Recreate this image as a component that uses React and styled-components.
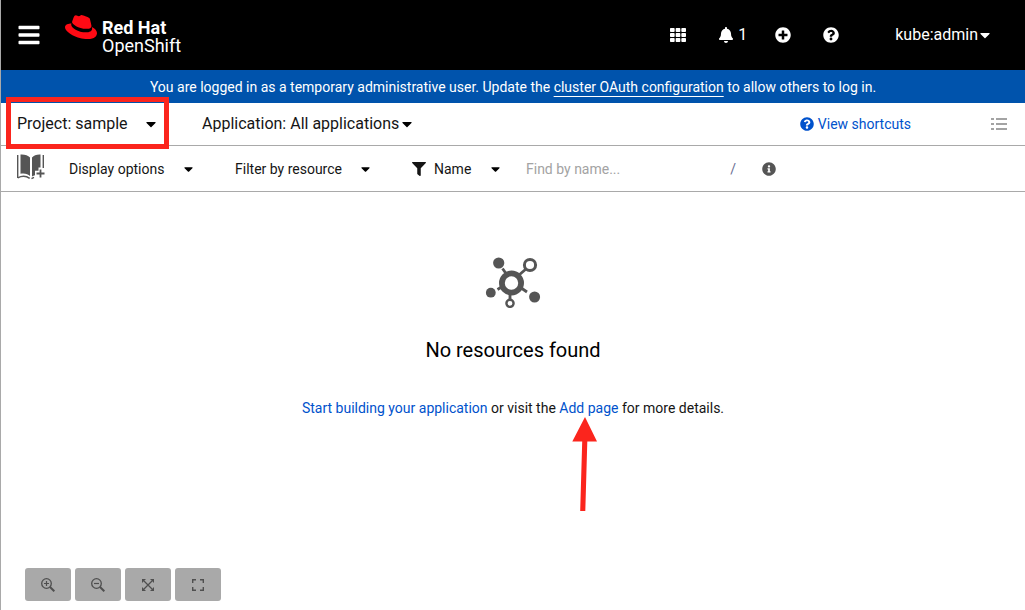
import React from 'react';
import styled, { createGlobalStyle } from 'styled-components';
import {
  FaBars,
  FaTh,
  FaBell,
  FaPlusCircle,
  FaQuestionCircle,
  FaCaretDown,
  FaFilter,
  FaInfoCircle,
  FaRedhat,
} from 'react-icons/fa';

const color = {
  link: '#0052cc',
  banner: '#0053ac',
  line: '#a9a9a9',
  icon: '#555555',
  mark: '#fb251d',
};

const GlobalStyle = createGlobalStyle`
  *, *::before, *::after { box-sizing: border-box; }
  body {
    margin: 0;
    background: #ffffff;
    color: #151515;
    font-family: Roboto, "Liberation Sans", sans-serif;
    font-size: 14px;
    line-height: 20px;
  }
  button, input, select { font: inherit; color: inherit; }
  svg { display: block; flex: none; }
`;

const Page = styled.div`
  min-height: 100vh;
  display: flex;
  flex-direction: column;
  border-left: 1px solid ${color.line};
`;

const Masthead = styled.header`
  display: flex;
  align-items: center;
  height: 70px;
  padding: 0 35px 0 16px;
  background: #000000;
  color: #ffffff;
`;

const PlainButton = styled.button`
  display: flex;
  align-items: center;
  gap: 4px;
  padding: 0;
  border: 0;
  background: none;
  cursor: pointer;
  font-size: ${(p) => (p.$large ? 16 : 14)}px;
`;

const Brand = styled.a`
  display: flex;
  align-items: flex-start;
  gap: 5px;
  margin-left: 24px;
  padding-bottom: 4px;
  color: #ffffff;
  text-decoration: none;
`;

const BrandName = styled.span`
  display: flex;
  flex-direction: column;
  padding-top: 8px;
  font-size: 18px;
  line-height: 18px;
`;

const BrandStrong = styled.strong`
  font-weight: 700;
`;

const HatIcon = styled(FaRedhat)`
  color: #ff0a14;
`;

const Tools = styled.nav`
  display: flex;
  align-items: center;
  gap: 32px;
  margin-left: auto;
`;

const NotificationButton = styled(PlainButton)`
  margin-right: -4px;
`;

const UserButton = styled(PlainButton)`
  gap: 2px;
  margin-left: 24px;
`;

const Caret = styled(FaCaretDown)`
  width: ${(p) => (p.$large ? 10 : 9)}px;
  height: ${(p) => (p.$large ? 16 : 14)}px;
`;

const Banner = styled.div`
  padding: 7px 16px 6px;
  background: ${color.banner};
  color: #ffffff;
  text-align: center;
`;

const BannerLink = styled.a`
  color: inherit;
  text-decoration: underline;
  text-underline-offset: 4px;
`;

const Bar = styled.div`
  display: flex;
  align-items: center;
  height: ${(p) => (p.$tall ? 46 : 43)}px;
  padding: 0 18px 0 16px;
  border-bottom: 1px solid ${color.line};
`;

const Picker = styled.label`
  display: grid;
  grid-template-columns: auto;
  align-items: center;
  font-size: ${(p) => (p.$large ? 16 : 14)}px;
  margin-left: ${(p) => p.$before || 0}px;

  select {
    grid-area: 1 / 1;
    appearance: none;
    padding: 0 ${(p) => p.$space}px 0 0;
    border: 0;
    background: none;
    color: #151515;
  }

  svg {
    grid-area: 1 / 1;
    justify-self: end;
    color: #000000;
    pointer-events: none;
  }
`;

const Marked = styled.div`
  position: relative;

  &::after {
    content: '';
    position: absolute;
    inset: -17px -13px -15px -11px;
    border: 5px solid ${color.mark};
    pointer-events: none;
  }
`;

const Shortcuts = styled.a`
  display: flex;
  align-items: center;
  gap: 4px;
  margin: 0 80px 0 auto;
  color: ${color.link};
  text-decoration: none;
`;

const CatalogButton = styled(PlainButton)`
  color: ${color.icon};
`;

const FilterPicker = styled.div`
  display: flex;
  align-items: center;
  gap: 8px;
  margin-left: 42px;
`;

const Search = styled.label`
  display: flex;
  align-items: center;
  margin-left: 26px;
  width: 210px;

  input {
    flex: 1;
    min-width: 0;
    padding: 0;
    border: 0;
    background: none;
    outline-offset: 4px;
  }
  input::placeholder { color: #a3a3a3; opacity: 1; }
`;

const Slash = styled.kbd`
  font-family: inherit;
  color: #6a6e90;
`;

const InfoButton = styled(PlainButton)`
  margin-left: 26px;
  color: ${color.icon};
`;

const Main = styled.main`
  flex: 1;
  display: flex;
  flex-direction: column;
`;

const EmptyState = styled.section`
  display: flex;
  flex-direction: column;
  align-items: center;
  padding-top: 64px;
`;

const Title = styled.h1`
  margin: 26px 0 0;
  color: #000000;
  font-size: 20px;
  font-weight: 400;
  line-height: 32px;
`;

const Message = styled.p`
  margin: 32px 0 0;
`;

const TextLink = styled.a`
  position: relative;
  color: ${color.link};
  text-decoration: none;
`;

const Arrow = styled.svg`
  position: absolute;
  top: 100%;
  left: 12px;
  pointer-events: none;
`;

const ViewControls = styled.div`
  display: flex;
  gap: 4px;
  margin-top: auto;
  padding: 0 24px 9px;
`;

const ControlButton = styled.button`
  display: flex;
  align-items: center;
  justify-content: center;
  width: 46px;
  height: 33px;
  padding: 0;
  border: 0;
  border-radius: 3px;
  background: ${color.line};
  color: #4f4f4f;
  cursor: pointer;
`;

function Dropdown({ label, text, large, before, space }) {
  return (
    <Picker $large={large} $before={before} $space={space}>
      <select aria-label={label} defaultValue={text}>
        <option>{text}</option>
      </select>
      <Caret $large={large} />
    </Picker>
  );
}

function ListIcon() {
  return (
    <svg width="16" height="12" viewBox="0 0 16 12" fill="#a3a3a3" aria-hidden="true">
      <path d="M0 0h3v2H0zM5 0h11v2H5zM0 5h3v2H0zM5 5h11v2H5zM0 10h3v2H0zM5 10h11v2H5z" />
    </svg>
  );
}

function CatalogIcon() {
  return (
    <svg width="28" height="30" viewBox="0 0 28 30" fill="none" aria-hidden="true">
      <path d="M3.500 .5c4-.3 7.500 .8 9.500 3V22c-2-2.200-5.500-3-9.500-2.300z" fill="currentColor" />
      <path d="M15 3.500c2-2.200 4.500-3.200 8.500-3V13.500h-2v3.300h-3.500v4.500c-1 .1-2 .5-3 1.200z" fill="currentColor" />
      <path d="M.7 1v23M26.300 1v13" stroke="currentColor" strokeWidth="1.400" />
      <path d="M.7 23.800c4-2 8.500-2 12 .6M14.500 24.600l2.500-1.200" stroke="currentColor" strokeWidth="1.500" />
      <path d="M23.500 15.500v8M19.500 19.500h8" stroke="currentColor" strokeWidth="1.800" />
    </svg>
  );
}

function TopologyIcon() {
  return (
    <svg width="56" height="52" viewBox="0 0 56 52" fill="none" stroke="#555" aria-hidden="true">
      <circle cx="26.500" cy="27" r="9.600" strokeWidth="5.800" />
      <circle cx="45" cy="9" r="5.600" strokeWidth="3" />
      <circle cx="25" cy="47.300" r="3.600" strokeWidth="2.400" />
      <g fill="#555" stroke="none">
        <circle cx="13.700" cy="7" r="5.600" />
        <circle cx="5.800" cy="36.700" r="4.900" />
        <circle cx="49.600" cy="41" r="5.500" />
      </g>
      <path
        d="M17.500 12.500l3.500 5M34 19l7-6M16.500 31l-4 2.500M35.500 31.500l6.500 4.500M25 38v6"
        strokeWidth="2.800"
      />
    </svg>
  );
}

function ZoomIcon({ plus }) {
  return (
    <svg width="14" height="14" viewBox="0 0 14 14" fill="none" stroke="currentColor" aria-hidden="true">
      <circle cx="5.500" cy="5.500" r="4.800" strokeWidth="1.300" />
      <path d={plus ? 'M3 5.500h5M5.500 3v5' : 'M3 5.500h5'} strokeWidth="1.200" />
      <path d="M9 9l4.300 4.300" strokeWidth="2" />
    </svg>
  );
}

function FitIcon() {
  return (
    <svg width="12" height="12" viewBox="0 0 12 12" aria-hidden="true">
      <path d="M0 0h4L0 4zM12 0v4L8 0zM0 12V8l4 4zM12 12H8l4-4z" fill="currentColor" />
      <path d="M2 2l8 8M10 2l-8 8" stroke="currentColor" strokeWidth="1.200" />
    </svg>
  );
}

function ExpandIcon() {
  return (
    <svg width="12" height="12" viewBox="0 0 12 12" fill="none" stroke="currentColor" aria-hidden="true">
      <path d="M4 .7H.7V4M8 .7h3.300V4M4 11.300H.7V8M8 11.300h3.300V8" strokeWidth="1.400" />
    </svg>
  );
}

export default function App() {
  return (
    <>
      <GlobalStyle />
      <Page>
        <Masthead>
          <PlainButton aria-label="Toggle navigation">
            <FaBars size={24} />
          </PlainButton>
          <Brand href="#home">
            <HatIcon size={32} />
            <BrandName>
              <BrandStrong>Red Hat</BrandStrong>
              <span>OpenShift</span>
            </BrandName>
          </Brand>
          <Tools aria-label="Tools">
            <PlainButton aria-label="Applications">
              <FaTh size={16} />
            </PlainButton>
            <NotificationButton aria-label="1 notification" $large>
              <FaBell size={16} />
              <span>1</span>
            </NotificationButton>
            <PlainButton aria-label="Import">
              <FaPlusCircle size={16} />
            </PlainButton>
            <PlainButton aria-label="Help">
              <FaQuestionCircle size={16} />
            </PlainButton>
            <UserButton aria-haspopup="menu" $large>
              kube:admin
              <Caret $large />
            </UserButton>
          </Tools>
        </Masthead>

        <Banner>
          You are logged in as a temporary administrative user. Update the{' '}
          <BannerLink href="#oauth">cluster OAuth configuration</BannerLink> to allow others to log in.
        </Banner>

        <Bar>
          <Marked>
            <Dropdown label="Project" text="Project: sample" large space={28} />
          </Marked>
          <Dropdown label="Application" text="Application: All applications" large before={46} space={12} />
          <Shortcuts href="#shortcuts">
            <FaQuestionCircle size={14} />
            View shortcuts
          </Shortcuts>
          <PlainButton aria-label="List view">
            <ListIcon />
          </PlainButton>
        </Bar>

        <Bar $tall>
          <CatalogButton aria-label="Add to project">
            <CatalogIcon />
          </CatalogButton>
          <Dropdown label="Display options" text="Display options" before={24} space={28} />
          <Dropdown label="Filter by resource" text="Filter by resource" before={42} space={28} />
          <FilterPicker>
            <FaFilter size={14} />
            <Dropdown label="Filter type" text="Name" space={28} />
          </FilterPicker>
          <Search>
            <input type="text" aria-label="Find by name" placeholder="Find by name..." />
            <Slash>/</Slash>
          </Search>
          <InfoButton aria-label="Search help">
            <FaInfoCircle size={14} />
          </InfoButton>
        </Bar>

        <Main>
          <EmptyState>
            <TopologyIcon />
            <Title>No resources found</Title>
            <Message>
              <TextLink href="#build">Start building your application</TextLink> or visit the{' '}
              <TextLink href="#add">
                Add page
                <Arrow width="26" height="96" viewBox="0 0 26 96" fill={color.mark} aria-hidden="true">
                  <path d="M14 1L26 25.500H16.300L14.300 95H9.200L11.200 25.500H1.300z" />
                </Arrow>
              </TextLink>{' '}
              for more details.
            </Message>
          </EmptyState>
          <ViewControls>
            <ControlButton aria-label="Zoom in">
              <ZoomIcon plus />
            </ControlButton>
            <ControlButton aria-label="Zoom out">
              <ZoomIcon />
            </ControlButton>
            <ControlButton aria-label="Fit to screen">
              <FitIcon />
            </ControlButton>
            <ControlButton aria-label="Reset view">
              <ExpandIcon />
            </ControlButton>
          </ViewControls>
        </Main>
      </Page>
    </>
  );
}
